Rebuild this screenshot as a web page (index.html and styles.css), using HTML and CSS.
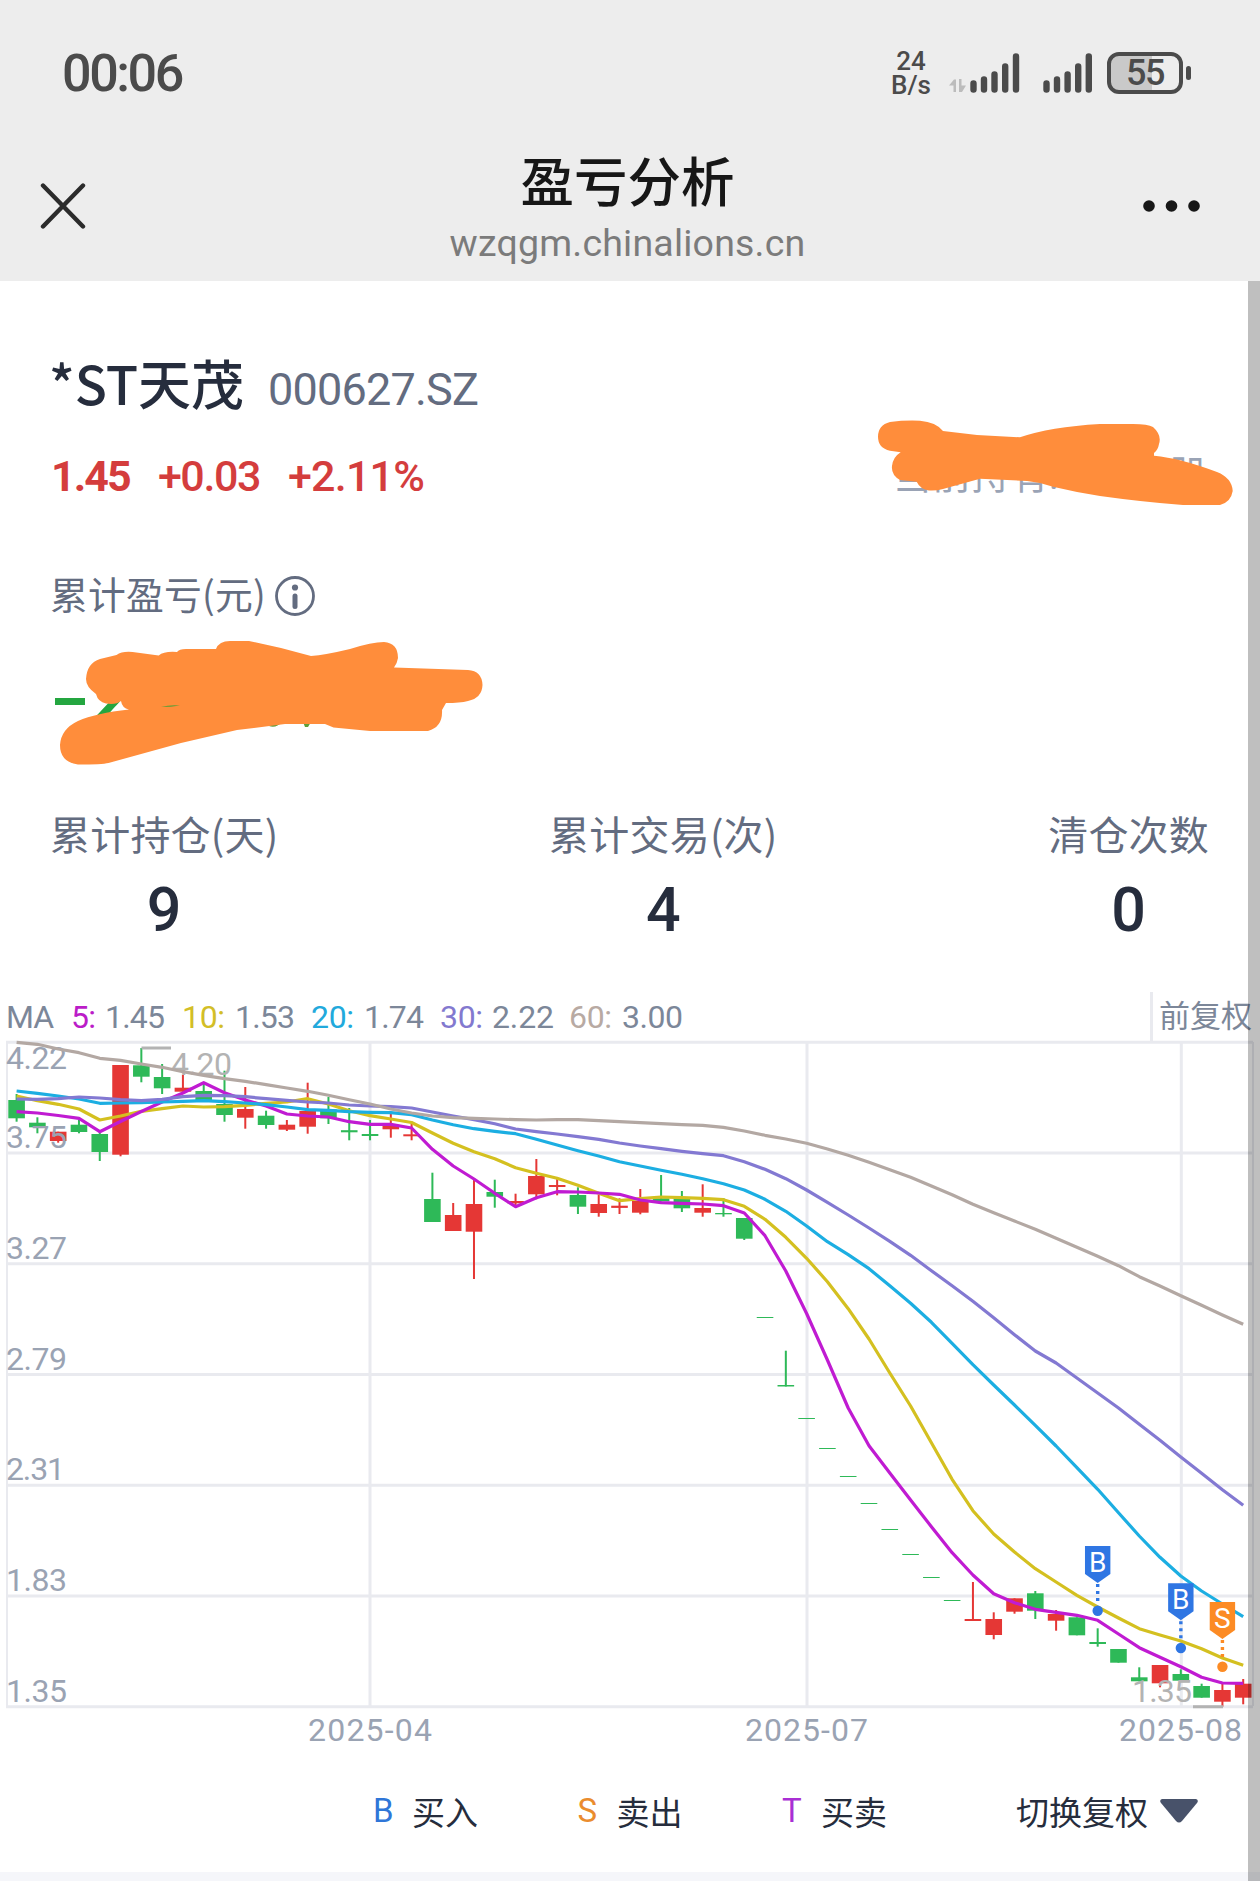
FILE: index.html
```html
<!DOCTYPE html>
<html lang="zh-CN">
  <head>
    <meta charset="UTF-8" />
    <meta name="viewport" content="width=device-width, initial-scale=1.0" />
    <title>盈亏分析</title>
    <link rel="stylesheet" href="styles.css">
  </head>
  <body>
    <header class="header">
      <div class="status">
        <span class="time">00:06</span>
        <div class="status-right">
          <div class="speed"><span>24</span><span>B/s</span></div>
          <svg class="signal" width="150" height="42" viewBox="948 51 150 42">
            <path fill="#bcbcbc" d="M950 84.500l5-6h2v12.500h-2.500v-6.500zM960 78h2.500v6.500h4.500l-4 6.500h-3z" />
            <g stroke="#4b4b4b" stroke-width="6.400" stroke-linecap="round">
              <path d="M974.500 82.500v6M985 78.500v10M995.500 73.500v15M1006.200 65.500v23M1017 55.500v33" />
              <path d="M1047.500 82.500v6M1058 78.500v10M1068.600 73.500v15M1079.200 65.500v23M1089.800 55.500v33" />
            </g>
          </svg>
          <div class="battery"><span>55</span></div>
          <i class="battery-nub"></i>
        </div>
      </div>
      <div class="nav">
        <svg width="46" height="46" viewBox="0 0 46 46" stroke="#2b2b2b" stroke-width="4.400" stroke-linecap="round">
          <path d="M3 2.500l40 41M43 2.500l-40 41" />
        </svg>
        <div class="nav-title">
          <h1>盈亏分析</h1>
          <p>wzqgm.chinalions.cn</p>
        </div>
        <svg class="more" width="58" height="12" viewBox="0 0 58 12" fill="#171717">
          <circle cx="6" cy="6" r="5.800" />
          <circle cx="28.500" cy="6" r="5.800" />
          <circle cx="51" cy="6" r="5.800" />
        </svg>
      </div>
    </header>

    <main class="page">
      <div class="scrollbar"></div>
      <section class="summary">
        <div class="stock">
          <span class="name">*ST天茂</span>
          <span class="code">000627.SZ</span>
        </div>
        <div class="quote">
          <div class="prices">
            <span class="price">1.45</span>
            <span class="change">+0.03</span>
            <span class="percent">+2.11%</span>
          </div>
          <div class="holding">
            <span>当前持有:</span><span>股</span>
            <svg class="scribble scribble-top" width="360" height="90" viewBox="876 418 360 90">
              <path d="M890 422Q905 420 920 420.700Q936 422 943 431L977 435L1020 437.300Q1050 427 1100 424H1133Q1148 424 1153 427Q1162 435 1159 444Q1158 450 1154 453V455.700Q1180 458 1217 472Q1232 478 1232.700 491Q1231 502 1220 505H1183Q1143 502 1100 496Q1075 492 1053 486.700Q1040 482 1027 481L980 478.700L943 489Q936 491 929 490.500Q920 489 916.700 481.700L900 480Q891 475 892 466Q893 457 900.700 452.300L890 450.700Q878 448 878 436.700Q878 425 890 422Z" />
            </svg>
          </div>
        </div>
        <div class="profit-label">
          <span>累计盈亏(元)</span>
          <svg width="42" height="42" viewBox="0 0 42 42">
            <circle cx="21" cy="21" r="18.500" fill="none" stroke="#636c80" stroke-width="2.800" />
            <circle cx="21" cy="12.500" r="3.100" fill="#636c80" />
            <path d="M21 21v10.500" stroke="#636c80" stroke-width="5" stroke-linecap="round" />
          </svg>
        </div>
        <div class="profit">
          <i class="minus"></i><span>2</span>
          <svg class="scribble scribble-profit" width="440" height="130" viewBox="50 638 440 130">
            <path class="digit-rest" d="M269 722h13q-6 6.500-13 4zM303 722h8l-3 5h-3z" />
            <path d="M116.500 655Q122 651 132.600 652L158.700 655.500Q164 651 177 652Q179 649 186 649H216Q219 641 230 641H249L281 648L311 656Q325 655 350 649Q372 642 384 642Q398 643 398 658Q397 664 394 667.500L468 670Q482 671 482.500 685Q482 698 468 701Q460 703 446 703L442 710Q443 727 428 731H370L333.500 727.500L325 724H285L237 730L181 743L108.500 763Q102 764.500 78 764.500Q60 762 60 745Q61 729 78 721Q96 713 129 709.500Q122 708 121 701Q116 705 106 703.500Q98 702 96 694Q86 687 86 679Q87 663 100 659Z" />
            <path class="digit-rest" d="M161 707q9-2.500 19-1.500q-9 1.500-19 1.500z" />
          </svg>
        </div>
        <div class="metrics">
          <div class="metric"><span>累计持仓(天)</span><b>9</b></div>
          <div class="metric"><span>累计交易(次)</span><b>4</b></div>
          <div class="metric"><span>清仓次数</span><b>0</b></div>
        </div>
      </section>

      <section class="chart">
        <div class="chart-head">
          <svg class="ma" width="700" height="50" viewBox="0 992 700 50">
            <text x="6" y="1027.500" textLength="48">MA</text>
            <text class="ma5" x="71" y="1027.500" textLength="25">5:</text>
            <text x="105" y="1027.500" textLength="60">1.45</text>
            <text class="ma10" x="182" y="1027.500" textLength="43">10:</text>
            <text x="235" y="1027.500" textLength="60">1.53</text>
            <text class="ma20" x="311" y="1027.500" textLength="43">20:</text>
            <text x="364" y="1027.500" textLength="60">1.74</text>
            <text class="ma30" x="440" y="1027.500" textLength="43">30:</text>
            <text x="492" y="1027.500" textLength="62">2.22</text>
            <text class="ma60" x="569" y="1027.500" textLength="43">60:</text>
            <text x="622" y="1027.500" textLength="61">3.00</text>
          </svg>
          <span class="adjust">前复权</span>
        </div>
        <svg class="kline" id="kline" width="1260" height="714" viewBox="0 1042 1260 714">
          <path class="grid" d="M6 1042.300H1253M6 1153H1253M6 1263.800H1253M6 1374.500H1253M6 1485.300H1253M6 1596H1253M6 1706.700H1253M370 1042V1706M807 1042V1706M1181.300 1042V1706" />
          <path class="grid side" d="M7 1042V1706M1253 1042V1706" />
          <g id="candles"></g>
          <g class="axis">
            <text x="6" y="1069" textLength="61">4.22</text>
            <text x="6" y="1147.700" textLength="61">3.75</text>
            <text x="6" y="1258.700" textLength="61">3.27</text>
            <text x="6" y="1369.500" textLength="61">2.79</text>
            <text x="6" y="1480.300" textLength="59">2.31</text>
            <text x="6" y="1591" textLength="61">1.83</text>
            <text x="6" y="1701.700" textLength="61">1.35</text>
            <text x="308" y="1740.500" textLength="124">2025-04</text>
            <text x="745" y="1740.500" textLength="123">2025-07</text>
            <text x="1119" y="1740.500" textLength="123">2025-08</text>
          </g>
          <g class="extreme">
            <path d="M141.500 1048H171M1193 1706.700H1223" />
            <text x="171" y="1074.500" textLength="61">4.20</text>
            <text x="1132" y="1701.700" textLength="60">1.35</text>
          </g>
          <g id="lines"></g>
          <g id="marks"></g>
        </svg>
        <div class="legend">
          <span class="buy"><b>B</b>买入</span>
          <span class="sell"><b>S</b>卖出</span>
          <span class="both"><b>T</b>买卖</span>
          <span class="switch">切换复权
            <svg width="38" height="24" viewBox="0 0 38 24"><path fill="#48526a" d="M2 0h34q3 1 1 4l-15 18q-3 3-6 0l-15-18q-2-3 1-4z" /></svg>
          </span>
        </div>
      </section>
      <div class="divider"></div>
    </main>
    <script src="chart.js"></script>
  </body>
</html>
```
FILE: styles.css
```css
* {
  margin: 0;
  padding: 0;
  box-sizing: border-box;
}
body {
  width: 1260px;
  height: 1881px;
  overflow: hidden;
  background-color: #fff;
  color: #262d3d;
  font-family: Roboto, "Noto Sans CJK SC", sans-serif;
}

svg {
  display: block;
  flex: none;
}

/* header */
.header {
  height: 281px;
  background-color: #ededed;
}

.status {
  height: 145px;
  padding: 0 69px 0 62px;
  display: flex;
  justify-content: space-between;
  align-items: center;
  color: #4b4b4b;
}

.time {
  font-size: 52px;
  font-weight: 500;
  letter-spacing: -2.4px;
  line-height: 60px;
  margin-top: 2px;
}

.status-right {
  display: flex;
  align-items: center;
}

.speed {
  width: 40px;
  margin-right: 16px;
  display: flex;
  flex-direction: column;
  align-items: center;
  font-size: 26px;
  font-weight: 500;
  line-height: 24px;
}

.battery {
  width: 76px;
  height: 42px;
  margin-left: 10px;
  border: 4px solid #4b4b4b;
  border-radius: 12px;
  background: linear-gradient(to right, #c9c9c9 41px, #ededed 41px);
  text-align: center;
  font-size: 36px;
  font-weight: 500;
  line-height: 35px;
  letter-spacing: -1.5px;
}

.battery-nub {
  width: 5px;
  height: 14px;
  margin-left: 3px;
  border-radius: 3px;
  background-color: #4b4b4b;
}

.nav {
  height: 136px;
  padding: 0 59px 14px 40px;
  display: flex;
  justify-content: space-between;
  align-items: center;
}

.nav-title {
  text-align: center;
  padding: 9px 0 0 26px;
}

.nav-title h1 {
  font-size: 53.5px;
  font-weight: 500;
  line-height: 64px;
  color: #171717;
}

.nav-title p {
  font-size: 37.5px;
  line-height: 54px;
  letter-spacing: 0.2px;
  color: #7b7b7b;
}

/* summary */
.page {
  position: relative;
}

.scrollbar {
  position: absolute;
  top: 0;
  right: 0;
  width: 12px;
  height: 1600px;
  background-color: rgba(0, 0, 0, 0.25);
  z-index: 2;
}

.summary {
  height: 711px;
  padding: 71px 52px 0 51px;
}

.stock {
  height: 60px;
  display: flex;
  align-items: baseline;
  gap: 24px;
  margin-left: -2px;
  line-height: 60px;
}

.name {
  font-family: "Noto Sans CJK SC", sans-serif;
  font-size: 53px;
  font-weight: 500;
}

.code {
  font-size: 45px;
  letter-spacing: -0.8px;
  color: #636c80;
}

.quote {
  height: 60px;
  margin-top: 34px;
  display: flex;
  justify-content: space-between;
  line-height: 60px;
}

.prices {
  display: flex;
  gap: 28px;
  font-size: 43px;
  font-weight: 500;
  color: #d43d3d;
}

.price {
  font-weight: 700;
  letter-spacing: -1.9px;
}

.change {
  letter-spacing: -1.4px;
}

.percent {
  letter-spacing: -0.8px;
}

.holding {
  position: relative;
  width: 315px;
  display: flex;
  justify-content: space-between;
  font-size: 39px;
  color: #9aa3b5;
}

.scribble {
  position: absolute;
  fill: #ff8d3b;
}

.scribble-top {
  left: -17px;
  top: -28px;
}

.profit-label {
  height: 50px;
  margin-top: 62px;
  display: flex;
  align-items: center;
  gap: 8px;
  font-family: "Noto Sans CJK SC", sans-serif;
  font-size: 37.8px;
  line-height: 50px;
  color: #636c80;
}

.profit-label svg {
  margin-top: 6px;
}

.profit-label span {
  margin-left: -1px;
  letter-spacing: 0.2px;
}

.profit {
  position: relative;
  height: 130px;
  margin-top: 22px;
  padding: 0 4px 9px;
  display: flex;
  align-items: center;
  gap: 8px;
  color: #24a640;
  font-size: 62px;
  font-weight: 700;
}

.minus {
  width: 30px;
  height: 7px;
  margin-top: 2px;
  background-color: #24a640;
}

.scribble-profit {
  left: -1px;
  top: -2px;
}

.digit-rest {
  fill: #5f9f38;
}

.metrics {
  margin: 38px -1px 0 -1px;
  display: flex;
  justify-content: space-between;
}

.metric {
  display: flex;
  flex-direction: column;
  align-items: center;
  font-family: "Noto Sans CJK SC", sans-serif;
  font-size: 40px;
  line-height: 50px;
  letter-spacing: 0.2px;
  color: #636c80;
}

.metric b {
  margin-top: 17px;
  font-family: Roboto, sans-serif;
  font-size: 61px;
  font-weight: 500;
  line-height: 70px;
  color: #262d3d;
}

/* chart */
.chart-head {
  height: 50px;
  padding-right: 8px;
  display: flex;
  justify-content: space-between;
}

.adjust {
  padding-left: 6px;
  border-left: 3px solid #e9eaef;
  font-size: 31px;
  line-height: 50px;
  color: #7c8799;
}

.ma,
.kline {
  overflow: visible;
  font-size: 32px;
}

.ma text {
  fill: #7c8799;
}

.ma .ma5 {
  fill: #bb1cc8;
}

.ma .ma10 {
  fill: #d3be27;
}

.ma .ma20 {
  fill: #22a9dc;
}

.ma .ma30 {
  fill: #8379cf;
}

.ma .ma60 {
  fill: #b8aaa3;
}

.grid {
  fill: none;
  stroke: #e9eaef;
  stroke-width: 3;
}

.side {
  stroke-width: 2;
}

.axis {
  fill: #9aa3b3;
}

.extreme {
  fill: #b3b3b3;
}

.extreme path {
  stroke: #b3b3b3;
  stroke-width: 3;
}

.up {
  fill: #e53735;
}

.down {
  fill: #2eb958;
}

.line {
  fill: none;
  stroke-width: 3.2;
  stroke-linejoin: round;
}

.line-5 {
  stroke: #c01bd2;
}

.line-10 {
  stroke: #d4c020;
}

.line-20 {
  stroke: #1caee2;
}

.line-30 {
  stroke: #8379d2;
}

.line-60 {
  stroke: #b3a8a3;
}

.mark-buy {
  fill: #2f76e3;
  stroke: #2f76e3;
}

.mark-sell {
  fill: #fc8b24;
  stroke: #fc8b24;
}

.flag,
.dot {
  stroke: none;
}

.dash {
  stroke-width: 3.4;
  stroke-dasharray: 3 4;
}

.mark-text {
  fill: #fff;
  stroke: none;
  font-size: 28px;
  text-anchor: middle;
}

.legend {
  height: 116px;
  padding: 0 62px 7px 373px;
  display: flex;
  align-items: center;
  font-size: 33px;
  color: #262d3d;
}

.legend span {
  display: flex;
  align-items: center;
  width: 204.500px;
}

.legend b {
  width: 39px;
  font-size: 33px;
  font-weight: 400;
}

.buy b {
  color: #2f76d8;
}

.sell b {
  color: #ea8c2e;
}

.both b {
  color: #a92fd4;
}

.legend .switch {
  width: 182px;
  margin-left: auto;
  justify-content: space-between;
}

.divider {
  height: 9px;
  background-color: #f5f6fa;
}
```
FILE: chart.js
```js
const X0 = 16.6;
const STEP = 20.79;
const ns = "http://www.w3.org/2000/svg";

// [up, high, body top, body bottom, low]
const candles = [
  [0, 1094, 1100, 1118.3, 1121.7],
  [0, 1117.3, 1122.7, 1127.3, 1133.3],
  [1, 1131.7, 1131.7, 1141, 1142.7],
  [0, 1120, 1124.7, 1132, 1133.3],
  [0, 1131.7, 1134, 1152, 1161],
  [1, 1065, 1065, 1154.7, 1156.3],
  [0, 1048, 1065.3, 1076.7, 1082.3],
  [0, 1064, 1077, 1088.3, 1094],
  [1, 1075, 1087.7, 1091.7, 1091.7],
  [0, 1084, 1091, 1100.7, 1100.7],
  [0, 1070.7, 1104, 1115, 1121.7],
  [1, 1087, 1109, 1117.7, 1128.7],
  [0, 1110.7, 1115.7, 1125, 1128.7],
  [1, 1120, 1124.7, 1129.7, 1131],
  [1, 1082.7, 1111, 1126.7, 1133.7],
  [0, 1097, 1109.3, 1118.3, 1124],
  [0, 1108, 1130.2, 1132.3, 1140.3],
  [0, 1120, 1134, 1136, 1140.3],
  [1, 1113.3, 1125.3, 1129.3, 1137.7],
  [1, 1123.3, 1134.3, 1136.3, 1140.3],
  [0, 1172.7, 1199, 1222, 1222],
  [1, 1203, 1215, 1231, 1231],
  [1, 1180, 1204, 1231.7, 1279],
  [0, 1179.7, 1192, 1196.7, 1207.7],
  [1, 1193.7, 1201, 1203.3, 1205.7],
  [1, 1159, 1176, 1194.3, 1199.3],
  [1, 1177.3, 1185, 1187, 1195.3],
  [0, 1187.3, 1195, 1206.7, 1214],
  [1, 1195, 1204, 1213, 1216.7],
  [1, 1198.3, 1205.7, 1207.9, 1214],
  [1, 1189, 1201, 1212.7, 1214.3],
  [0, 1175, 1198.3, 1201.3, 1201.3],
  [0, 1191, 1198.3, 1208.3, 1212],
  [1, 1184.3, 1208, 1212.7, 1216.7],
  [0, 1198, 1213, 1214.3, 1216.7],
  [0, 1218, 1218, 1238.7, 1240],
  [0, 1317, 1317, 1318, 1318],
  [0, 1350.7, 1385, 1386.5, 1386.5],
  [0, 1418, 1418, 1419, 1419],
  [0, 1448, 1448, 1449, 1449],
  [0, 1476, 1476, 1477, 1477],
  [0, 1503, 1503, 1504, 1504],
  [0, 1529, 1529, 1530, 1530],
  [0, 1554, 1554, 1555, 1555],
  [0, 1577, 1577, 1578, 1578],
  [0, 1600, 1600, 1601, 1601],
  [1, 1582, 1619, 1621, 1621],
  [1, 1612.3, 1619, 1635, 1639.3],
  [1, 1598.3, 1598.3, 1611.7, 1613.7],
  [0, 1591, 1593.3, 1610.7, 1619],
  [1, 1610, 1614, 1620.7, 1630.7],
  [0, 1617.3, 1617.3, 1635.3, 1635.3],
  [0, 1628.3, 1642, 1644, 1646.7],
  [0, 1649, 1649, 1662.7, 1662.7],
  [0, 1667.3, 1677.3, 1681.3, 1681.3],
  [1, 1665, 1665, 1683.3, 1687.3],
  [0, 1669.3, 1674, 1680.7, 1680.7],
  [0, 1683.7, 1686, 1697.7, 1697.7],
  [1, 1683.7, 1690, 1701.7, 1706.7],
  [1, 1679, 1683.7, 1697.7, 1704.3],
];

const averages = {
  10: [1096, 1100.7, 1104.3, 1109, 1120, 1116, 1111.3, 1108.7, 1106, 1107, 1106.7, 1105.3, 1103.3, 1102, 1098.7, 1104, 1110.7, 1115.7, 1119, 1122.5, 1133, 1143.3, 1151.7, 1158.7, 1167.7, 1173.3, 1178.3, 1185.3, 1193.3, 1200.7, 1198.7, 1197, 1197.7, 1198.3, 1199.7, 1206.3, 1219.3, 1237.3, 1258.3, 1281.7, 1308.7, 1339, 1373, 1406, 1442.7, 1479.3, 1510.7, 1534, 1552, 1568.7, 1582, 1595.3, 1607, 1618, 1628.7, 1635, 1641, 1648.7, 1658, 1665.3],
  5: [1111.7, 1113, 1115.5, 1118.3, 1131.7, 1121.5, 1111.5, 1102, 1093, 1082.7, 1092.7, 1100, 1106, 1114, 1116, 1117, 1121.7, 1124.3, 1124.3, 1128, 1149.3, 1166, 1179, 1193.3, 1206.7, 1197.7, 1191.7, 1192, 1193, 1194.3, 1200, 1202.7, 1203.3, 1204, 1205.7, 1213, 1235.7, 1271, 1313.5, 1360, 1408, 1445.7, 1473, 1500, 1526.7, 1552.7, 1575, 1593.7, 1602.7, 1609.3, 1612.3, 1615.3, 1620.3, 1634, 1647.7, 1657.3, 1666.7, 1677.3, 1683, 1683.3],
  20: [1091, 1093.3, 1096, 1099, 1103.3, 1103, 1102.7, 1102, 1101.3, 1100.7, 1101.7, 1103, 1104.7, 1107, 1109.7, 1110.3, 1111.7, 1112.3, 1112.7, 1114.7, 1120, 1124.7, 1128.7, 1131.3, 1133.7, 1139.3, 1145, 1150.7, 1156, 1161.7, 1166, 1170.3, 1174.3, 1178.7, 1183.7, 1190, 1199.3, 1211.3, 1226, 1241.7, 1254.7, 1268.7, 1285.7, 1303.3, 1322.3, 1343.3, 1364.7, 1385, 1405, 1425.3, 1446, 1467.7, 1489.3, 1512.7, 1536, 1557.3, 1576, 1591, 1604, 1616.7],
  30: [1099, 1099.3, 1098.7, 1097, 1098, 1099.7, 1100.7, 1099.3, 1096.7, 1095.3, 1095.7, 1096.7, 1098.7, 1100.3, 1102, 1103, 1105, 1106, 1106.7, 1108, 1112, 1116, 1119.7, 1123.7, 1129, 1131.7, 1134, 1136.7, 1139.3, 1143, 1146, 1148.7, 1151.3, 1153.7, 1155.7, 1161.7, 1169.3, 1178.7, 1190, 1202.3, 1215, 1228, 1241.3, 1255.3, 1270.7, 1285.7, 1301.3, 1317.7, 1334.7, 1351, 1363, 1378, 1393, 1408, 1424.3, 1440.3, 1457, 1473.3, 1489.7, 1505.3],
  60: [1042.3, 1044.3, 1049, 1052.7, 1058.3, 1060.3, 1064, 1067.3, 1071.7, 1075.3, 1078.7, 1081.3, 1084.7, 1088, 1091.3, 1095.3, 1099.7, 1104, 1109, 1113, 1116, 1117.7, 1118.3, 1119, 1119.7, 1120, 1119.7, 1119.7, 1120.7, 1121.7, 1122.7, 1123.7, 1124.7, 1125.3, 1127.3, 1131, 1135.3, 1139, 1143.3, 1149, 1155.3, 1162.3, 1169.7, 1177.3, 1186, 1194.7, 1204.3, 1212.7, 1221, 1229.3, 1238.3, 1247.3, 1256.3, 1265.7, 1276.7, 1286, 1295.7, 1305.3, 1315, 1324.3],
};

// [type, candle index, flag top]
const marks = [
  ["B", 52, 1546],
  ["B", 56, 1583.3],
  ["S", 58, 1602],
];

function add(parent, tag, attrs, text) {
  const el = document.createElementNS(ns, tag);
  for (const key in attrs) {
    el.setAttribute(key, attrs[key]);
  }
  if (text) {
    el.textContent = text;
  }
  parent.appendChild(el);
}

const candleGroup = document.querySelector("#candles");
candles.forEach(([up, high, top, bottom, low], i) => {
  const x = X0 + i * STEP;
  const cls = up ? "up" : "down";
  add(candleGroup, "rect", { class: cls, x: x - 1, y: high, width: 2, height: low - high });
  add(candleGroup, "rect", { class: cls, x: x - 8.3, y: top, width: 16.6, height: bottom - top });
});

const lineGroup = document.querySelector("#lines");
[10, 5, 20, 30, 60].forEach((n) => {
  const points = averages[n].map((y, i) => `${(X0 + i * STEP).toFixed(1)},${y}`).join(" ");
  add(lineGroup, "polyline", { class: `line line-${n}`, points });
});

const markGroup = document.querySelector("#marks");
marks.forEach(([type, i, y]) => {
  const x = X0 + i * STEP;
  const g = document.createElementNS(ns, "g");
  g.setAttribute("class", type == "B" ? "mark-buy" : "mark-sell");
  add(g, "path", { class: "flag", d: `M${x - 12.7} ${y}h25.400v28l-12.700 9l-12.700-9z` });
  add(g, "line", { class: "dash", x1: x, x2: x, y1: y + 38, y2: y + 56 });
  add(g, "circle", { class: "dot", cx: x, cy: y + 64.7, r: 5.2 });
  add(g, "text", { class: "mark-text", x, y: y + 26 }, type);
  markGroup.appendChild(g);
});
```
